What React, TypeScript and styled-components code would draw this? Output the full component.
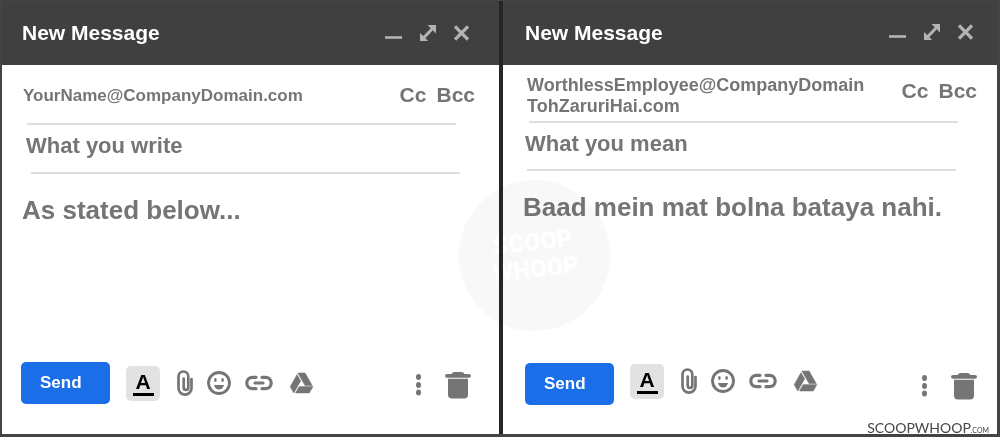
import React from "react";
import styled, { createGlobalStyle } from "styled-components";

const GlobalStyle = createGlobalStyle`
  * { box-sizing: border-box; }
  body { margin: 0; background: #444; font-family: "Liberation Sans", Arial, sans-serif; font-weight: 700; }
  button, input, textarea { font: inherit; color: inherit; border: 0; padding: 0; margin: 0; background: none; }
  button { cursor: pointer; }
  svg { display: block; }
`;

const Frame = styled.main`
  position: relative;
  display: grid;
  grid-template-columns: 497fr 494fr;
  column-gap: 4px;
  min-height: 100vh;
  padding: 1px 3px 3px 2px;
  background: #444;
`;

const Panel = styled.form<{ $divider?: boolean }>`
  display: flex;
  flex-direction: column;
  min-width: 0;
  background: #fff;
  color: #757575;
  box-shadow: ${(p) => (p.$divider ? "4px 0 0 #262626" : "none")};
`;

const Header = styled.header<{ $left: number; $right: number; $lift: number }>`
  display: flex;
  align-items: center;
  justify-content: space-between;
  height: 64px;
  padding: 0 ${(p) => p.$right}px 0 ${(p) => p.$left}px;
  background: #404040;

  > div { padding-bottom: ${(p) => p.$lift}px; }
`;

const Title = styled.h2`
  margin: 0;
  font-size: 21px;
  line-height: 24px;
  color: #fff;
`;

const WindowControls = styled.div`
  display: flex;
  align-items: center;
  gap: 18px;
`;

const IconButton = styled.button<{ $width?: number }>`
  display: flex;
  align-items: center;
  justify-content: center;
  width: ${(p) => (p.$width ? `${p.$width}px` : "auto")};
`;

const Recipients = styled.div<{ $lines: number; $left: number; $right: number }>`
  display: flex;
  align-items: ${(p) => (p.$lines > 1 ? "flex-start" : "center")};
  padding: ${(p) => (p.$lines > 1 ? "10px" : "14px")} ${(p) => p.$right}px
    ${(p) => (p.$lines > 1 ? "4px" : "12px")} ${(p) => p.$left}px;
`;

const AddressField = styled.textarea<{ $size: number }>`
  flex: 1;
  min-width: 0;
  resize: none;
  overflow: hidden;
  outline: none;
  white-space: pre;
  font-size: ${(p) => p.$size}px;
  line-height: 21px;
`;

const CopyLinks = styled.div`
  display: flex;
  gap: 10px;
  font-size: 21px;
  line-height: 32px;
`;

const Rule = styled.hr<{ $left: number; $right: number }>`
  height: 2px;
  margin: 0 ${(p) => p.$right}px 0 ${(p) => p.$left}px;
  border: 0;
  background: #dedede;
`;

const SubjectField = styled.input<{ $left: number; $gap: number }>`
  && {
    height: 42px;
    padding-left: ${(p) => p.$left}px;
    margin-bottom: ${(p) => p.$gap}px;
    outline: none;
    font-size: 22px;
    line-height: 42px;
  }
`;

const MessageField = styled.textarea`
  && {
    flex: 1;
    min-height: 60px;
    padding: 20px 20px 0;
    resize: none;
    outline: none;
    overflow: hidden;
    font-size: 26px;
    line-height: 32px;
  }
`;

const Toolbar = styled.div<{ $left: number; $right: number; $bottom: number }>`
  display: flex;
  align-items: center;
  padding: 0 ${(p) => p.$right}px ${(p) => p.$bottom}px ${(p) => p.$left}px;
`;

const SendButton = styled.button`
  && {
    width: 89px;
    height: 42px;
    padding-left: 19px;
    border-radius: 5px;
    background: #1a6fe8;
    color: #fff;
    font-size: 17px;
    text-align: left;
  }
`;

const Tools = styled.div<{ $lift: number }>`
  display: flex;
  align-items: center;
  margin-left: 16px;
  padding-bottom: ${(p) => p.$lift}px;
`;

const FormatButton = styled.button`
  && {
    display: flex;
    flex-direction: column;
    align-items: center;
    width: 34px;
    height: 35px;
    margin-right: 7px;
    padding-top: 4px;
    border-radius: 5px;
    background: #e2e2e2;
    color: #000;
    font-size: 21px;
    line-height: 23px;
  }

  span {
    width: 21px;
    border-bottom: 3px solid #000;
  }
`;

const EndTools = styled.div`
  display: flex;
  align-items: center;
  gap: 24px;
  margin-left: auto;
  padding-top: 3px;
`;

const Watermark = styled.div`
  position: absolute;
  top: 180px;
  left: calc(50% - 41px);
  display: flex;
  align-items: center;
  justify-content: center;
  width: 151px;
  height: 151px;
  border-radius: 50%;
  background: #f8f8f8;
  color: #fff;
  mix-blend-mode: multiply;
  pointer-events: none;
  font-family: Roboto, sans-serif;
  font-weight: 900;
  font-size: 24px;
  line-height: 27px;
  text-align: center;

  span { transform: rotate(-6deg); }
`;

const Credit = styled.div`
  position: absolute;
  right: 11px;
  bottom: 0;
  font-family: Lato, sans-serif;
  font-weight: 400;
  font-size: 14px;
  line-height: 14px;
  color: #444;

  small { font-size: 7px; }
`;

const Minimize = () => (
  <svg width="17" height="16" viewBox="0 0 17 16"><path d="M0 12.5h17" stroke="#b4b4b4" strokeWidth="2.6" /></svg>
);
const Expand = () => (
  <svg width="16" height="16" viewBox="0 0 16 16" fill="#b4b4b4">
    <path d="M7.5 0H16v8.5l-3.2-3.200-2.900 3.200-1.400 1.600-3.100 2.800L8 16H0V8l3.200 3.100 3-3.200 1.400-1.400 3.200-3.200z" />
  </svg>
);
const Close = () => (
  <svg width="15" height="16" viewBox="0 0 15 16"><path d="M1 1.500l13 13M14 1.500l-13 13" stroke="#b4b4b4" strokeWidth="3.200" /></svg>
);
const Clip = () => (
  <svg width="16" height="26" viewBox="0 0 16 26" fill="none" stroke="#757575" strokeWidth="2.700" strokeLinecap="round">
    <path d="M14.500 9v9.300a6.500 6.300 0 0 1-13 0V6.500a4.900 5 0 0 1 9.800 0v10.900a2.300 2.500 0 0 1-4.600 0V8.500" />
  </svg>
);
const Smile = () => (
  <svg width="24" height="24" viewBox="0 0 24 24" fill="#757575">
    <circle cx="12" cy="12" r="10.500" fill="none" stroke="#757575" strokeWidth="2.800" />
    <ellipse cx="8.400" cy="9" rx="1.300" ry="1.900" />
    <ellipse cx="15.600" cy="9" rx="1.300" ry="1.900" />
    <path d="M7 14h10c-.8 3-2.700 4.500-5 4.500S7.800 17 7 14z" />
  </svg>
);
const Chain = () => (
  <svg width="28" height="16" viewBox="0 0 28 16" fill="none" stroke="#757575" strokeWidth="3.200" strokeLinecap="round">
    <path d="M11 2.300H7.500a5.700 5.700 0 0 0 0 11.400H11M17 2.300h3.500a5.700 5.700 0 0 1 0 11.400H17M10 8h8" />
  </svg>
);
const Drive = () => (
  <svg width="25" height="22" viewBox="0 1 24 21" fill="#757575" stroke="#757575" strokeWidth="0.600" strokeLinejoin="round">
    <path d="M7.710 3.500L1.150 15l3.430 6 6.550-11.500zM9.730 15L6.300 21h13.120l3.430-6zM22.280 14L15.420 2H8.580l6.850 12z" />
  </svg>
);
const Dots = () => (
  <svg width="5" height="22" viewBox="0 0 5 22" fill="#757575">
    <ellipse cx="2.500" cy="3" rx="2.500" ry="2.900" />
    <ellipse cx="2.500" cy="11" rx="2.500" ry="2.900" />
    <ellipse cx="2.500" cy="18.500" rx="2.500" ry="2.900" />
  </svg>
);
const Trash = () => (
  <svg width="26" height="28" viewBox="0 0 26 28" fill="#757575">
    <path d="M2 3h4.500q1-2 3-2h7q2 0 3 2H24q2 .2 2 2t-2 1.800H2Q0 6.800 0 5t2-2zM3 7.800h20v15.700q0 4-4 4H7q-4 0-4-4z" />
  </svg>
);

type Draft = {
  id: string;
  to: string;
  subject: string;
  body: string;
  lines: number;
  addressSize: number;
  divider?: boolean;
  header: { left: number; right: number; lift: number };
  inset: { to: number; cc: number; subject: number; gap: number };
  rules: [number, number][];
  bar: { left: number; right: number; bottom: number; lift: number };
};

const drafts: Draft[] = [
  {
    id: "write",
    to: "YourName@CompanyDomain.com",
    subject: "What you write",
    body: "As stated below...",
    lines: 1,
    addressSize: 17,
    divider: true,
    header: { left: 20, right: 30, lift: 0 },
    inset: { to: 21, cc: 24, subject: 24, gap: 5 },
    rules: [[25, 43], [29, 39]],
    bar: { left: 19, right: 28, bottom: 30, lift: 0 },
  },
  {
    id: "mean",
    to: "WorthlessEmployee@CompanyDomain\nTohZaruriHai.com",
    subject: "What you mean",
    body: "Baad mein mat bolna bataya nahi.",
    lines: 2,
    addressSize: 18,
    header: { left: 22, right: 24, lift: 2 },
    inset: { to: 24, cc: 20, subject: 22, gap: 4 },
    rules: [[26, 39], [24, 41]],
    bar: { left: 22, right: 20, bottom: 29, lift: 6 },
  },
];

function Compose({ draft }: { draft: Draft }) {
  const { header, inset, rules, bar } = draft;
  return (
    <Panel $divider={draft.divider} onSubmit={(e) => e.preventDefault()}>
      <Header $left={header.left} $right={header.right} $lift={header.lift}>
        <Title>New Message</Title>
        <WindowControls>
          <IconButton type="button" aria-label="Minimize"><Minimize /></IconButton>
          <IconButton type="button" aria-label="Full screen"><Expand /></IconButton>
          <IconButton type="button" aria-label="Close"><Close /></IconButton>
        </WindowControls>
      </Header>
      <Recipients $lines={draft.lines} $left={inset.to} $right={inset.cc}>
        <AddressField aria-label="To" rows={draft.lines} $size={draft.addressSize} defaultValue={draft.to} spellCheck={false} />
        <CopyLinks>
          <IconButton type="button">Cc</IconButton>
          <IconButton type="button">Bcc</IconButton>
        </CopyLinks>
      </Recipients>
      <Rule $left={rules[0][0]} $right={rules[0][1]} />
      <SubjectField aria-label="Subject" type="text" $left={inset.subject} $gap={inset.gap} defaultValue={draft.subject} />
      <Rule $left={rules[1][0]} $right={rules[1][1]} />
      <MessageField aria-label="Message" rows={1} defaultValue={draft.body} spellCheck={false} />
      <Toolbar $left={bar.left} $right={bar.right} $bottom={bar.bottom}>
        <SendButton type="submit">Send</SendButton>
        <Tools $lift={bar.lift}>
          <FormatButton type="button" aria-label="Formatting options"><span>A</span></FormatButton>
          <IconButton type="button" $width={36} aria-label="Attach files"><Clip /></IconButton>
          <IconButton type="button" $width={32} aria-label="Insert emoji"><Smile /></IconButton>
          <IconButton type="button" $width={48} aria-label="Insert link"><Chain /></IconButton>
          <IconButton type="button" $width={36} aria-label="Insert from Drive"><Drive /></IconButton>
        </Tools>
        <EndTools>
          <IconButton type="button" aria-label="More options"><Dots /></IconButton>
          <IconButton type="button" aria-label="Discard draft"><Trash /></IconButton>
        </EndTools>
      </Toolbar>
    </Panel>
  );
}

export default function App() {
  return (
    <>
      <GlobalStyle />
      <Frame>
        {drafts.map((draft) => (
          <Compose key={draft.id} draft={draft} />
        ))}
        <Watermark><span>SCOOP<br />WHOOP</span></Watermark>
        <Credit>SCOOPWHOOP<small>.COM</small></Credit>
      </Frame>
    </>
  );
}
